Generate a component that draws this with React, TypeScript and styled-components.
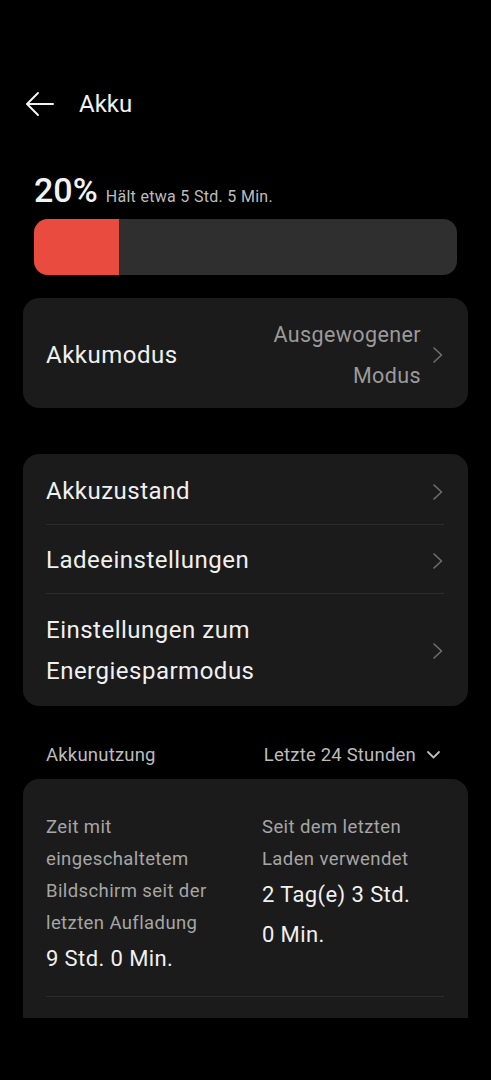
import React from 'react';
import styled, { createGlobalStyle } from 'styled-components';

const GlobalStyle = createGlobalStyle`
  html, body {
    margin: 0;
    padding: 0;
    background: #000000;
  }
  body {
    font-family: Roboto, "Noto Sans", "Liberation Sans", sans-serif;
    color: #f0f0f0;
  }
`;

const Screen = styled.div`
  width: 491px;
  height: 1080px;
  background: #000000;
  overflow: hidden;
`;

const Scroll = styled.div`
  height: 1018px;
  overflow: hidden;
  padding: 0 23px;
  box-sizing: border-box;
`;

const Header = styled.div`
  display: flex;
  align-items: center;
  height: 56px;
  margin-top: 76px;
  gap: 24px;
  padding-left: 2px;
`;

const Title = styled.div`
  font-size: 24px;
  color: #f2f2f2;
`;

const Summary = styled.div`
  display: flex;
  align-items: baseline;
  gap: 8px;
  margin-top: 38px;
  padding-left: 11px;
  line-height: 40px;
`;

const Percent = styled.span`
  font-size: 34px;
  font-weight: 500;
  color: #f2f2f2;
`;

const Remaining = styled.span`
  font-size: 16px;
  letter-spacing: 0.3px;
  color: #bdbdbd;
`;

const Bar = styled.div`
  margin: 2px 11px 0 11px;
  height: 56px;
  border-radius: 14px;
  background: #2f2f2f;
  overflow: hidden;
  display: flex;
`;

const BarFill = styled.div`
  background: #e94b3e;
  height: 100%;
`;

const Card = styled.div<{ $top: number; $flat?: boolean }>`
  margin-top: ${(p) => p.$top}px;
  background: #1b1b1b;
  border-radius: ${(p) => (p.$flat ? '16px 16px 0 0' : '16px')};
  padding: 2px 24px 2px 23px;
`;

const Row = styled.div<{ $padTop: number; $padBottom: number }>`
  display: flex;
  align-items: center;
  justify-content: space-between;
  padding: ${(p) => p.$padTop}px 0 ${(p) => p.$padBottom}px;
  gap: 12px;
  & + & {
    border-top: 1px solid #2c2c2c;
  }
`;

const RowLabel = styled.div`
  font-size: 24px;
  letter-spacing: 0.5px;
  line-height: 41px;
  color: #f0f0f0;
`;

const RowRight = styled.div`
  display: flex;
  align-items: center;
  gap: 11px;
`;

const RowValue = styled.div`
  font-size: 21.5px;
  letter-spacing: 0.4px;
  line-height: 41px;
  color: #9a9a9a;
  text-align: right;
`;

const SectionHeader = styled.div`
  display: flex;
  align-items: center;
  justify-content: space-between;
  height: 48px;
  margin-top: 25px;
  padding: 0 27px 0 23px;
  font-size: 18.5px;
  letter-spacing: 0.2px;
  color: #bcbcbc;
`;

const Range = styled.div`
  display: flex;
  align-items: center;
  gap: 10px;
`;

const StatsCard = styled(Card)`
  padding-top: 32px;
  padding-bottom: 40px;
`;

const StatsGrid = styled.div`
  display: grid;
  grid-template-columns: 216px 1fr;
  padding-bottom: 17px;
  border-bottom: 1px solid #2c2c2c;
`;

const StatLabel = styled.div`
  font-size: 18.5px;
  letter-spacing: 0.4px;
  line-height: 32px;
  color: #a6a6a6;
`;

const StatValue = styled.div`
  font-size: 22px;
  letter-spacing: 0.4px;
  line-height: 40px;
  color: #f0f0f0;
`;

const Chevron = () => (
  <svg width="12" height="18" viewBox="0 0 12 18">
    <path d="M2 2 L9.5 9 L2 16" fill="none" stroke="#6f6f6f" strokeWidth="1.6" strokeLinecap="round" strokeLinejoin="round" />
  </svg>
);

const ChevronDown = () => (
  <svg width="15" height="10" viewBox="0 0 15 10">
    <path d="M2 2 L7.5 7.5 L13 2" fill="none" stroke="#bcbcbc" strokeWidth="1.8" strokeLinecap="round" strokeLinejoin="round" />
  </svg>
);

const BackArrow = () => (
  <svg width="30" height="26" viewBox="0 0 30 26">
    <path d="M28 13 H3 M13 2 L2 13 L13 24" fill="none" stroke="#f2f2f2" strokeWidth="2" strokeLinecap="round" strokeLinejoin="round" />
  </svg>
);

const App = () => {
  const level = 20;

  return (
    <Screen>
      <GlobalStyle />
      <Scroll>
        <Header>
          <BackArrow />
          <Title>Akku</Title>
        </Header>

        <Summary>
          <Percent>{level}%</Percent>
          <Remaining>Hält etwa 5 Std. 5 Min.</Remaining>
        </Summary>
        <Bar>
          <BarFill style={{ width: `${level}%` }} />
        </Bar>

        <Card $top={23}>
          <Row $padTop={14} $padBottom={10}>
            <RowLabel>Akkumodus</RowLabel>
            <RowRight>
              <RowValue>
                Ausgewogener
                <br />
                Modus
              </RowValue>
              <Chevron />
            </RowRight>
          </Row>
        </Card>

        <Card $top={46}>
          <Row $padTop={15} $padBottom={12}>
            <RowLabel>Akkuzustand</RowLabel>
            <Chevron />
          </Row>
          <Row $padTop={15} $padBottom={12}>
            <RowLabel>Ladeeinstellungen</RowLabel>
            <Chevron />
          </Row>
          <Row $padTop={16} $padBottom={12}>
            <RowLabel>
              Einstellungen zum
              <br />
              Energiesparmodus
            </RowLabel>
            <Chevron />
          </Row>
        </Card>

        <SectionHeader>
          <span>Akkunutzung</span>
          <Range>
            <span>Letzte 24 Stunden</span>
            <ChevronDown />
          </Range>
        </SectionHeader>

        <StatsCard $top={0} $flat>
          <StatsGrid>
            <div>
              <StatLabel>
                Zeit mit
                <br />
                eingeschaltetem
                <br />
                Bildschirm seit der
                <br />
                letzten Aufladung
              </StatLabel>
              <StatValue>9 Std. 0 Min.</StatValue>
            </div>
            <div>
              <StatLabel>
                Seit dem letzten
                <br />
                Laden verwendet
              </StatLabel>
              <StatValue>
                2 Tag(e) 3 Std.
                <br />
                0 Min.
              </StatValue>
            </div>
          </StatsGrid>
        </StatsCard>
      </Scroll>
    </Screen>
  );
};

export default App;
